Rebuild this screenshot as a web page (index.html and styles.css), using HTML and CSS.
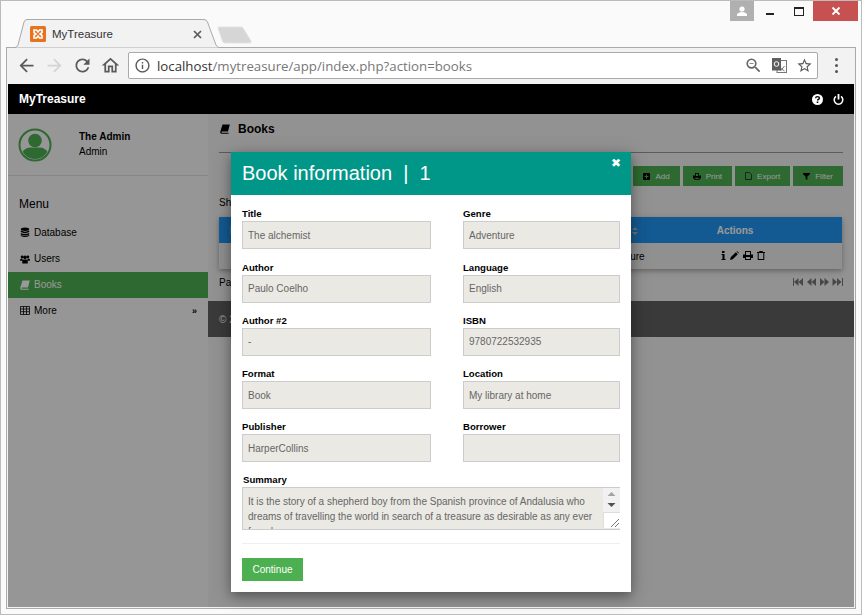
FILE: index.html
```html
<!DOCTYPE html>
<html lang="en">

<head>
    <meta charset="UTF-8">
    <title>MyTreasure</title>
    <link rel="stylesheet" href="styles.css">
</head>

<body>
    <div class="window">
        <div class="titlebar">
            <div class="tab">
                <svg class="tab-shape" width="206" height="29" viewBox="0 0 206 29">
                    <path d="M0 28.500 H2 Q4 28 5 26 L11 3 Q12 .5 14 .5 L191 .5 Q193.500 .5 194.500 3 L203 26 Q204 28 206 28.500" fill="#f2f2f2" stroke="#a9a9a9" />
                </svg>
                <svg class="favicon" width="16" height="16" viewBox="0 0 16 16">
                    <rect width="16" height="16" rx="1.500" fill="#e8731f" />
                    <path d="M4 4 H6.500 L8 6 L9.500 4 H12 V6.500 L10 8 L12 9.500 V12 H9.500 L8 10 L6.500 12 H4 V9.500 L6 8 L4 6.500 Z" fill="none" stroke="#fff" stroke-width="1.600" />
                </svg>
                <span class="tab-title">MyTreasure</span>
                <svg class="tab-close" width="9" height="9" viewBox="0 0 9 9">
                    <path d="M1 1 L8 8 M8 1 L1 8" stroke="#5a5a5a" stroke-width="1.700" />
                </svg>
            </div>
            <svg class="newtab" width="35" height="18" viewBox="0 0 35 18">
                <path d="M1 2 Q1 1 2 1 L24 1 Q25 1 26 2 L34 15 Q34.500 17 33 17 L8 17 Q6 17 5.500 15 Z" fill="#d6d6d6" stroke="#e2e2e2" />
            </svg>
            <div class="wincontrols">
                <div class="win-user">
                    <svg width="12" height="10" viewBox="0 0 12 10">
                        <circle cx="6" cy="3" r="2.600" fill="#fff" />
                        <path d="M1 10 V8 Q3 6 6 6 Q9 6 11 8 V10 Z" fill="#fff" />
                    </svg>
                </div>
                <div class="win-min"><span></span></div>
                <div class="win-max"><span></span></div>
                <div class="win-close">
                    <svg width="10" height="10" viewBox="0 0 10 10">
                        <path d="M1.500 1.500 L8.500 8.500 M8.500 1.500 L1.500 8.500" stroke="#fff" stroke-width="1.800" />
                    </svg>
                </div>
            </div>
        </div>

        <div class="browser">
            <div class="toolbar">
                <svg class="nav-icon" width="21" height="21" viewBox="0 0 24 24"><path fill="#5a5a5a" d="M20 11H7.830l5.590-5.590L12 4l-8 8 8 8 1.410-1.410L7.830 13H20v-2z" /></svg>
                <svg class="nav-icon" width="21" height="21" viewBox="0 0 24 24"><path fill="#d4d4d4" d="M12 4l-1.410 1.410L16.170 11H4v2h12.170l-5.580 5.590L12 20l8-8z" /></svg>
                <svg class="nav-icon" width="21" height="21" viewBox="0 0 24 24"><path fill="#5a5a5a" d="M17.650 6.350C16.200 4.900 14.210 4 12 4c-4.420 0-7.990 3.580-7.990 8s3.570 8 7.990 8c3.730 0 6.840-2.550 7.730-6h-2.080c-.82 2.330-3.040 4-5.650 4-3.310 0-6-2.690-6-6s2.690-6 6-6c1.660 0 3.140.69 4.220 1.780L13 11h7V4l-2.350 2.350z" /></svg>
                <svg class="nav-icon" width="21" height="21" viewBox="0 0 24 24"><path fill="#5a5a5a" d="M12 5.690l5 4.500V18h-2v-6H9v6H7v-7.810l5-4.500M12 3L2 12h3v8h6v-6h2v6h6v-8h3L12 3z" /></svg>
                <div class="urlbar">
                    <svg width="17" height="17" viewBox="0 0 24 24"><path fill="#5a5a5a" d="M11 7h2v2h-2zm0 4h2v6h-2zm1-9C6.480 2 2 6.480 2 12s4.480 10 10 10 10-4.480 10-10S17.520 2 12 2zm0 18c-4.410 0-8-3.590-8-8s3.590-8 8-8 8 3.590 8 8-3.590 8-8 8z" /></svg>
                    <div class="url"><b>localhost</b>/mytreasure/app/index.php?action=books</div>
                    <svg width="19" height="19" viewBox="0 0 24 24"><path fill="#666" d="M15.500 14h-.79l-.28-.27A6.471 6.471 0 0 0 16 9.500 6.500 6.500 0 1 0 9.500 16c1.610 0 3.090-.59 4.230-1.570l.27.28v.79l5 4.990L20.490 19l-4.990-5zm-6 0C7.010 14 5 11.990 5 9.500S7.010 5 9.500 5 14 7.010 14 9.500 11.990 14 9.500 14zM7 9h5v1H7z" /></svg>
                    <svg class="translate" width="15" height="15" viewBox="0 0 15 15">
                        <rect x="5" y="2.500" width="9.500" height="12" fill="#fff" stroke="#777" />
                        <path d="M7 9 L12.500 13 M12.500 8 L8.500 13" stroke="#777" fill="none" />
                        <rect width="9" height="12.500" fill="#5f5f5f" />
                        <circle cx="4.500" cy="6" r="2.300" fill="none" stroke="#fff" />
                    </svg>
                    <svg width="17" height="17" viewBox="0 0 24 24"><path fill="#5a5a5a" d="M22 9.240l-7.190-.62L12 2 9.190 8.630 2 9.240l5.460 4.730L5.820 21 12 17.270 18.180 21l-1.630-7.030L22 9.240zM12 15.400l-3.760 2.270 1-4.280-3.320-2.880 4.380-.38L12 6.100l1.710 4.040 4.380.38-3.320 2.880 1 4.280L12 15.400z" /></svg>
                </div>
                <div class="menu-dots"><span></span><span></span><span></span></div>
            </div>

            <div class="navbar">
                <div class="brand">MyTreasure</div>
                <div class="nav-actions">
                    <svg width="11" height="11" viewBox="0 0 11 11">
                        <circle cx="5.500" cy="5.500" r="5.500" fill="#fff" />
                        <path d="M3.600 4.300 Q3.700 2.600 5.500 2.600 Q7.400 2.600 7.400 4.100 Q7.400 5 6.300 5.500 Q5.500 5.900 5.500 6.600" fill="none" stroke="#000" stroke-width="1.400" />
                        <rect x="4.700" y="7.500" width="1.600" height="1.500" fill="#000" />
                    </svg>
                    <svg width="11" height="11" viewBox="0 0 11 11">
                        <path d="M3 2.400 A4.300 4.300 0 1 0 8 2.400" fill="none" stroke="#fff" stroke-width="1.600" />
                        <path d="M5.500 0 V5.500" stroke="#fff" stroke-width="1.800" />
                    </svg>
                </div>
            </div>

            <div class="page">
                <aside class="sidebar">
                    <div class="profile">
                        <svg width="34" height="34" viewBox="0 0 34 34">
                            <defs>
                                <clipPath id="avatarClip"><circle cx="17" cy="17" r="14" /></clipPath>
                            </defs>
                            <circle cx="17" cy="17" r="15.500" fill="#fafafa" stroke="#4caf50" stroke-width="2" />
                            <circle cx="17" cy="12.500" r="6.800" fill="#4caf50" />
                            <path d="M3 34 V26 Q6 20 12 19.500 H22 Q28 20 31 26 V34 Z" fill="#4caf50" clip-path="url(#avatarClip)" />
                        </svg>
                        <div class="profile-text">
                            <div class="profile-name">The Admin</div>
                            <div class="profile-role">Admin</div>
                        </div>
                    </div>
                    <div class="menu-title">Menu</div>
                    <a class="menu-item" href="#">
                        <svg class="menu-icon" width="10" height="11" viewBox="0 0 10 10">
                            <ellipse cx="5" cy="1.700" rx="4.200" ry="1.700" />
                            <path d="M.8 3.100 Q5 5.300 9.200 3.100 V4.600 Q5 6.800 .8 4.600 Z M.8 5.400 Q5 7.600 9.200 5.400 V6.900 Q5 9 .8 6.900 Z M.8 7.600 Q5 9.600 9.200 7.600 V8.600 Q5 10.600 .8 8.600 Z" />
                        </svg>Database
                    </a>
                    <a class="menu-item" href="#">
                        <svg class="menu-icon" width="11" height="10" viewBox="0 0 11 10">
                            <circle cx="2.300" cy="2.600" r="1.500" />
                            <circle cx="8.700" cy="2.600" r="1.500" />
                            <circle cx="5.500" cy="3.200" r="2" />
                            <path d="M0 7 Q0 4.500 1.500 4.500 H2.800 Q2.600 6 3 7 Z M11 7 Q11 4.500 9.500 4.500 H8.200 Q8.400 6 8 7 Z M2.500 10 V7.500 Q2.500 5.500 4 5.500 H7 Q8.500 5.500 8.500 7.500 V10 Z" />
                        </svg>Users
                    </a>
                    <a class="menu-item menu-active" href="#">
                        <svg class="menu-icon" width="10" height="10" viewBox="0 0 10 10">
                            <path d="M2.500 .5 H9.800 L8 7.500 H1.800 Q1.200 8.600 2 8.800 H8.800 L8.500 9.800 H1.500 Q-.2 9.500 .3 7.500 Z" />
                        </svg>Books
                    </a>
                    <a class="menu-item" href="#">
                        <svg class="menu-icon" width="10" height="9" viewBox="0 0 10 9">
                            <path d="M.5 .5 H9.500 V8.500 H.5 Z M.5 3 H9.500 M.5 5.700 H9.500 M3.500 .5 V8.500 M6.500 .5 V8.500" fill="none" stroke="#000" stroke-width=".8" />
                        </svg>More<span class="more-arrow">&raquo;</span>
                    </a>
                </aside>

                <main class="main">
                    <div class="content">
                        <h2 class="page-title">
                            <svg width="10" height="10" viewBox="0 0 10 10">
                                <path d="M2.500 .5 H9.800 L8 7.500 H1.800 Q1.200 8.600 2 8.800 H8.800 L8.500 9.800 H1.500 Q-.2 9.500 .3 7.500 Z" />
                            </svg>Books
                        </h2>
                        <div class="toolbar-btns">
                            <a class="btn" href="#">
                                <svg width="7" height="7" viewBox="0 0 7 7">
                                    <path fill-rule="evenodd" d="M1 0 H6 Q7 0 7 1 V6 Q7 7 6 7 H1 Q0 7 0 6 V1 Q0 0 1 0 Z M3 1.500 V3 H1.500 V4 H3 V5.500 H4 V4 H5.500 V3 H4 V1.500 Z" />
                                </svg>Add
                            </a>
                            <a class="btn" href="#">
                                <svg width="8" height="7" viewBox="0 0 8 7">
                                    <path fill-rule="evenodd" d="M2 0 H6 V2.500 H8 V5.500 H6.500 V7 H1.500 V5.500 H0 V2.500 H2 Z M2.800 .8 V3 H5.200 V.8 Z M2.300 4.700 V6.200 H5.700 V4.700 Z" />
                                </svg>Print
                            </a>
                            <a class="btn" href="#">
                                <svg width="7" height="8" viewBox="0 0 7 8">
                                    <path d="M.5 .5 H4.500 L6.500 2.500 V7.500 H.5 Z" fill="none" stroke="#000" stroke-width=".6" />
                                </svg>Export
                            </a>
                            <a class="btn" href="#">
                                <svg width="7" height="7" viewBox="0 0 7 7">
                                    <path d="M0 0 H7 V1 L4.300 3.700 V7 L2.700 6 V3.700 L0 1 Z" />
                                </svg>Filter
                            </a>
                        </div>
                        <div class="showing">Showing 1 book</div>
                        <table class="books">
                            <thead>
                                <tr>
                                    <th>ID</th>
                                    <th>Title</th>
                                    <th class="col-genre">Genre<svg class="sort" width="6" height="8" viewBox="0 0 6 8" fill="#bbb"><path d="M0 3 L3 0 L6 3 Z M0 5 H6 L3 8 Z" /></svg></th>
                                    <th class="col-actions">Actions</th>
                                </tr>
                            </thead>
                            <tbody>
                                <tr>
                                    <td>1</td>
                                    <td>The alchemist</td>
                                    <td class="col-genre">Adventure</td>
                                    <td class="col-actions row-icons">
                                        <svg width="5" height="9" viewBox="0 0 5 9"><path d="M1 0 H3.500 V2 H1 Z M.5 3 H3.500 V8 H4.500 V9 H.5 V8 H1.500 V4 H.5 Z" /></svg>
                                        <svg width="9" height="9" viewBox="0 0 9 9"><path d="M0 9 L.7 6.300 L5.800 1.200 L7.800 3.200 L2.700 8.300 Z M6.400 .6 Q7 0 7.600 .4 L8.600 1.400 Q9 2 8.400 2.600 Z" /></svg>
                                        <svg width="10" height="9" viewBox="0 0 10 9"><path fill-rule="evenodd" d="M2 0 H8 V3.500 H10 V7 H8 V9 H2 V7 H0 V3.500 H2 Z M3 1 V4 H7 V1 Z M3 6 V8 H7 V6 Z" /></svg>
                                        <svg width="8" height="9" viewBox="0 0 8 9"><path fill-rule="evenodd" d="M2.500 0 H5.500 L6 1 H8 V2 H7.300 V9 H.7 V2 H0 V1 H2 Z M1.700 2 V8 H6.300 V2 Z" /></svg>
                                    </td>
                                </tr>
                            </tbody>
                        </table>
                        <div class="pager-row">
                            <span>Page 1 of 1</span>
                            <div class="pager">
                                <svg width="50" height="8" viewBox="0 0 50 8" fill="#777">
                                    <path d="M0 0 H1 V8 H0 Z M1 4 L5.500 0 V8 Z M5.500 4 L10 0 V8 Z" />
                                    <path d="M14 4 L18.500 0 V8 Z M18.500 4 L23 0 V8 Z" />
                                    <path d="M27 0 L31.500 4 L27 8 Z M31.500 0 L36 4 L31.500 8 Z" />
                                    <path d="M39.500 0 L44 4 L39.500 8 Z M44 0 L48.500 4 L44 8 Z M49 0 H50 V8 H49 Z" />
                                </svg>
                            </div>
                        </div>
                    </div>
                    <footer class="footer">&copy; 2017 MyTreasure</footer>
                </main>

                <div class="overlay"></div>

                <div class="modal">
                    <header class="modal-head">
                        <h3>Book information &nbsp;|&nbsp; 1</h3>
                        <span class="modal-close">&#10006;</span>
                    </header>
                    <form class="modal-form">
                        <div class="field"><label>Title</label><input readonly value="The alchemist"></div>
                        <div class="field"><label>Genre</label><input readonly value="Adventure"></div>
                        <div class="field"><label>Author</label><input readonly value="Paulo Coelho"></div>
                        <div class="field"><label>Language</label><input readonly value="English"></div>
                        <div class="field"><label>Author #2</label><input readonly value="-"></div>
                        <div class="field"><label>ISBN</label><input readonly value="9780722532935"></div>
                        <div class="field"><label>Format</label><input readonly value="Book"></div>
                        <div class="field"><label>Location</label><input readonly value="My library at home"></div>
                        <div class="field"><label>Publisher</label><input readonly value="HarperCollins"></div>
                        <div class="field"><label>Borrower</label><input readonly value=""></div>
                        <div class="field field-wide">
                            <label>Summary</label>
                            <div class="summary-wrap">
                                <textarea readonly>It is the story of a shepherd boy from the Spanish province of Andalusia who dreams of travelling the world in search of a treasure as desirable as any ever found.</textarea>
                                <div class="fake-scroll">
                                    <svg width="17" height="24" viewBox="0 0 17 24">
                                        <path d="M4.500 8 L8.500 4 L12.500 8 Z" fill="#a3a3a3" />
                                        <path d="M4.500 15 L12.500 15 L8.500 19 Z" fill="#505050" />
                                    </svg>
                                    <div class="grip">
                                        <svg width="8" height="8" viewBox="0 0 8 8"><path d="M0 8 L8 0 M4 8 L8 4" stroke="#777" /></svg>
                                    </div>
                                </div>
                            </div>
                        </div>
                    </form>
                    <div class="modal-foot">
                        <a class="btn-continue" href="#">Continue</a>
                    </div>
                </div>
            </div>
        </div>
    </div>
</body>

</html>
```

FILE: styles.css
```css
html,
body {
    margin: 0;
    padding: 0;
}

body {
    font-family: "Liberation Sans", Arial, sans-serif;
    font-size: 10px;
    color: #000;
}

a {
    color: inherit;
    text-decoration: none;
}

svg {
    display: block;
    flex: none;
}

.window {
    width: 862px;
    height: 615px;
    box-sizing: border-box;
    border: 1px solid #bbb;
    background: #fafafa;
    padding: 0 5px 5px;
    display: flex;
    flex-direction: column;
    overflow: hidden;
}

/* title bar */
.titlebar {
    height: 46px;
    display: flex;
    align-items: flex-start;
    position: relative;
    flex: none;
}

.tab {
    width: 206px;
    height: 29px;
    margin: 18px 0 0 7px;
    position: relative;
    z-index: 1;
    display: flex;
    align-items: center;
    padding: 1px 0 0 17px;
    box-sizing: border-box;
}

.tab-shape {
    position: absolute;
    left: 0;
    top: 0;
}

.favicon,
.tab-title,
.tab-close {
    position: relative;
}

.tab-title {
    margin-left: 6px;
    font-size: 11.5px;
    color: #333;
    flex: 1;
}

.tab-close {
    margin-right: 17px;
}

.newtab {
    margin: 25px 0 0 -2px;
}

.wincontrols {
    margin-left: auto;
    margin-right: -2px;
    display: flex;
    height: 20px;
}

.win-user {
    width: 24px;
    background: #b0b0b0;
    display: flex;
    align-items: center;
    justify-content: center;
}

.win-min {
    width: 27px;
    margin-left: 4px;
    position: relative;
}

.win-min span {
    position: absolute;
    left: 8px;
    top: 12px;
    width: 8px;
    height: 2px;
    background: #222;
}

.win-max {
    width: 27px;
    position: relative;
}

.win-max span {
    position: absolute;
    left: 9px;
    top: 6px;
    width: 8px;
    height: 6px;
    border: 1px solid #222;
    border-top-width: 2px;
}

.win-close {
    width: 45px;
    background: #c75050;
    margin-left: 1px;
    display: flex;
    align-items: center;
    justify-content: center;
}

/* browser frame */
.browser {
    flex: 1;
    min-height: 0;
    border: 1px solid #aaa;
    padding: 0 1px 1px;
    background: #f2f2f2;
    display: flex;
    flex-direction: column;
}

.toolbar {
    height: 36px;
    flex: none;
    display: flex;
    align-items: center;
    padding: 0 0 1px 8px;
    box-sizing: border-box;
}

.nav-icon {
    margin-right: 7px;
}

.urlbar {
    width: 690px;
    height: 27px;
    box-sizing: border-box;
    background: #fff;
    border: 1px solid #a9a9a9;
    border-radius: 2px;
    display: flex;
    align-items: center;
    gap: 6px;
    padding: 0 4px 0 5px;
}

.url {
    flex: 1;
    font-family: "Open Sans", "Liberation Sans", sans-serif;
    font-size: 13.250px;
    color: #777;
    white-space: nowrap;
}

.url b {
    font-weight: normal;
    color: #333;
}

.translate {
    margin: 0 3px;
}

.menu-dots {
    margin-left: 17px;
    display: flex;
    flex-direction: column;
    gap: 3px;
}

.menu-dots span {
    width: 3px;
    height: 3px;
    border-radius: 50%;
    background: #555;
}

/* navbar */
.navbar {
    height: 30px;
    flex: none;
    background: #000;
    color: #fff;
    display: flex;
    align-items: center;
    justify-content: space-between;
    padding: 0 10px 0 11px;
}

.brand {
    font-size: 12px;
    font-weight: bold;
}

.nav-actions {
    display: flex;
    gap: 10px;
}

/* page */
.page {
    flex: 1;
    min-height: 0;
    display: flex;
    position: relative;
    background: #f4f4f4;
}

.sidebar {
    width: 200px;
    flex: none;
    background: #fafafa;
}

.profile {
    height: 62px;
    box-sizing: border-box;
    border-bottom: 1px solid #e0e0e0;
    display: flex;
    padding: 14px 0 0 10px;
}

.profile-text {
    margin-left: 27px;
    padding-top: 3px;
}

.profile-name {
    font-weight: bold;
    line-height: 12px;
}

.profile-role {
    margin-top: 3px;
    line-height: 12px;
}

.menu-title {
    font-size: 12px;
    line-height: 14px;
    padding: 21px 0 0 11px;
    margin-bottom: 9px;
}

.menu-item {
    height: 26px;
    display: flex;
    align-items: center;
    padding: 0 11px 1px 12px;
    box-sizing: border-box;
    position: relative;
}

.menu-icon {
    margin-right: 4px;
    width: 10px;
}

.menu-active {
    background: #4caf50;
    color: #fff;
    fill: #fff;
}

.more-arrow {
    margin-left: auto;
    font-weight: bold;
    font-size: 9px;
}

.main {
    flex: 1;
    min-width: 0;
}

.content {
    padding: 0 11px;
}

.page-title {
    margin: 0;
    height: 39px;
    border-bottom: 1px solid #999;
    font-size: 12px;
    display: flex;
    align-items: flex-start;
    gap: 8px;
    padding-left: 1px;
    padding-top: 8px;
    box-sizing: border-box;
    line-height: 14px;
}

.page-title svg {
    margin-top: 2px;
}

.toolbar-btns {
    display: flex;
    justify-content: flex-end;
    gap: 3px;
    margin-top: 13px;
}

.btn {
    height: 20px;
    padding: 0 10px;
    background: #4caf50;
    color: #fff;
    font-size: 8px;
    display: flex;
    align-items: center;
    gap: 5px;
}

.showing {
    margin-top: 11px;
    line-height: 12px;
}

.books {
    width: 623px;
    margin-top: 8px;
    border-collapse: collapse;
    box-shadow: 0 2px 4px rgba(0, 0, 0, .2), 0 2px 8px rgba(0, 0, 0, .15);
}

.books th {
    height: 26px;
    padding: 0 0 0 11px;
    background: #2196f3;
    color: #fff;
    text-align: left;
}

.books td {
    height: 26px;
    padding: 0 0 0 12px;
    background: #f1f1f1;
}

.books .col-genre {
    width: 49px;
    padding-left: 11px;
}

.books th.col-genre {
    white-space: nowrap;
}

.sort {
    display: inline-block;
    margin-left: 4px;
    vertical-align: -1px;
}

.books .col-actions {
    width: 194px;
    padding: 0;
    text-align: center;
}

.books th.col-actions {
    padding-right: 20px;
    box-sizing: border-box;
}

.books td.row-icons {
    padding-right: 4px;
    box-sizing: border-box;
}

.row-icons svg {
    display: inline-block;
    margin: 0 .5px;
}

.pager-row {
    margin-top: 7px;
    height: 12px;
    display: flex;
    justify-content: space-between;
    align-items: center;
}

.footer {
    margin-top: 13px;
    height: 36px;
    background: #616161;
    color: #fff;
    display: flex;
    align-items: center;
    padding-left: 11px;
}

/* modal */
.overlay {
    position: absolute;
    inset: 0;
    background: rgba(0, 0, 0, .4);
}

.modal {
    position: absolute;
    left: 223px;
    top: 38px;
    width: 400px;
    height: 440px;
    background: #fff;
    box-shadow: 0 4px 10px rgba(0, 0, 0, .3), 0 4px 20px rgba(0, 0, 0, .2);
}

.modal-head {
    height: 43px;
    background: #009688;
    color: #fff;
    display: flex;
    align-items: center;
    padding-left: 11px;
    position: relative;
}

.modal-head h3 {
    margin: 0;
    font-size: 20px;
    font-weight: normal;
}

.modal-close {
    position: absolute;
    right: 10px;
    top: 4px;
    font-size: 12px;
    font-weight: bold;
    font-family: "DejaVu Sans", sans-serif;
}

.modal-form {
    display: grid;
    grid-template-columns: 189px 157px;
    column-gap: 32px;
    row-gap: 11.250px;
    padding: 12.300px 11px 0;
}

.field label {
    display: block;
    font-weight: bold;
    font-size: 9.600px;
    line-height: 13px;
    margin-bottom: 1px;
}

.field input {
    display: block;
    width: 100%;
    height: 28px;
    box-sizing: border-box;
    border: 1px solid #ccc;
    background: #ebe9e3;
    padding: 0 5px;
    margin: 0;
    font-family: inherit;
    font-size: 10px;
    color: #666;
    outline: none;
}

.field-wide {
    grid-column: 1 / 3;
    margin-top: -.5px;
}

.field-wide label {
    padding-left: 1px;
}

.summary-wrap {
    position: relative;
    height: 43px;
}

.summary-wrap textarea {
    display: block;
    width: 100%;
    height: 43px;
    box-sizing: border-box;
    border: 1px solid #ccc;
    border-right: 0;
    background: #ebe9e3;
    padding: 6px 5px 4px;
    margin: 0;
    font-family: inherit;
    font-size: 10px;
    line-height: 15px;
    color: #666;
    overflow: hidden;
    resize: none;
    outline: none;
}

.fake-scroll {
    position: absolute;
    right: 0;
    top: 1px;
    bottom: 2px;
    width: 17px;
    background: #f1f1f1;
}

.grip {
    position: absolute;
    left: 0;
    bottom: 0;
    width: 17px;
    height: 16px;
    background: #fff;
    border-left: 1px solid #ddd;
    border-top: 1px solid #ddd;
    box-sizing: border-box;
    display: flex;
    align-items: flex-end;
    justify-content: flex-end;
    padding: 0 1px 1px 0;
}

.modal-foot {
    margin: 13px 11px 0;
    padding-top: 14px;
    border-top: 1px solid #eee;
}

.btn-continue {
    display: inline-block;
    width: 61px;
    height: 23px;
    line-height: 23px;
    text-align: center;
    background: #4caf50;
    color: #fff;
}
```
